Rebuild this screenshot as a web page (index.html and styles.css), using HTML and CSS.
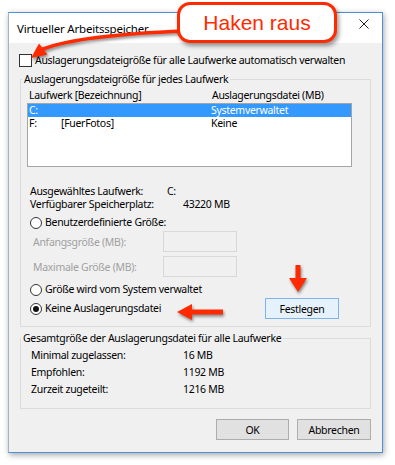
FILE: index.html
```html
<!DOCTYPE html>
<html lang="de">
<head>
<meta charset="utf-8">
<title>Virtueller Arbeitsspeicher</title>
<link rel="stylesheet" href="styles.css">
</head>
<body>
<div class="page">
  <div class="window">
    <div class="titlebar">
      <span class="title">Virtueller Arbeitsspeicher</span>
      <svg class="close" width="10" height="10" viewBox="0 0 10 10"><path d="M0.5 0.5 L9.5 9.5 M9.5 0.5 L0.5 9.5" stroke="#222" stroke-width="1" fill="none"/></svg>
    </div>
    <div class="content">
      <div class="auto-row">
        <span class="checkbox"></span>
        <span>Auslagerungsdateigröße für alle Laufwerke automatisch verwalten</span>
      </div>

      <fieldset class="group group-drives">
        <legend>Auslagerungsdateigröße für jedes Laufwerk</legend>
        <div class="group-body drives-body">
          <div class="list-head">
            <span class="col-drive">Laufwerk [Bezeichnung]</span>
            <span class="col-size">Auslagerungsdatei (MB)</span>
          </div>
          <div class="listbox">
            <div class="list-row selected">
              <span class="col-drive"><span class="letter">C:</span><span></span></span>
              <span class="col-size">Systemverwaltet</span>
            </div>
            <div class="list-row">
              <span class="col-drive"><span class="letter">F:</span><span>[FuerFotos]</span></span>
              <span class="col-size">Keine</span>
            </div>
          </div>

          <div class="info-row first"><span class="info-label w1">Ausgewähltes Laufwerk:</span><span>C:</span></div>
          <div class="info-row"><span class="info-label w2">Verfügbarer Speicherplatz:</span><span>43220 MB</span></div>

          <div class="radio-row r1"><span class="radio"></span><span>Benutzerdefinierte Größe:</span></div>
          <div class="size-row s1"><span class="disabled">Anfangsgröße (MB):</span><span class="textbox"></span></div>
          <div class="size-row s2"><span class="disabled">Maximale Größe (MB):</span><span class="textbox"></span></div>
          <div class="radio-row r2"><span class="radio"></span><span>Größe wird vom System verwaltet</span></div>
          <div class="radio-row r3"><span class="radio checked"></span><span>Keine Auslagerungsdatei</span><button class="btn btn-set">Festlegen</button></div>
        </div>
      </fieldset>

      <fieldset class="group group-total">
        <legend>Gesamtgröße der Auslagerungsdatei für alle Laufwerke</legend>
        <div class="group-body total-body">
          <div class="total-row"><span class="total-label">Minimal zugelassen:</span><span>16 MB</span></div>
          <div class="total-row"><span class="total-label">Empfohlen:</span><span>1192 MB</span></div>
          <div class="total-row"><span class="total-label">Zurzeit zugeteilt:</span><span>1216 MB</span></div>
        </div>
      </fieldset>

      <div class="buttons">
        <button class="btn">OK</button>
        <button class="btn">Abbrechen</button>
      </div>
    </div>
  </div>

  <svg class="curve-arrow" width="200" height="70" viewBox="0 0 200 70">
    <path d="M185 31 Q 80 35 43 49" stroke="#ff2a00" stroke-width="3.5" fill="none" stroke-linecap="round"/>
    <polygon points="31,58 39,43.5 47.5,54.5" fill="#ff2a00"/>
  </svg>
  <div class="callout">Haken raus</div>

  <svg class="arrow-left" width="47" height="17" viewBox="0 0 47 17">
    <polygon points="0,8 15,0 15,5.5 46,5.5 46,10.5 15,10.5 15,16" fill="#ff2a00"/>
  </svg>
  <svg class="arrow-down" width="18" height="28" viewBox="0 0 18 28">
    <polygon points="6.5,0 11.5,0 11.5,13 18,13 9,27 0,13 6.5,13" fill="#ff2a00"/>
  </svg>
</div>
</body>
</html>
```

FILE: styles.css
```css
html, body {
  margin: 0;
  padding: 0;
  background: #ffffff;
}

.page {
  position: relative;
  width: 395px;
  height: 465px;
  padding: 12px 0 0 8px;
  box-sizing: border-box;
  font-family: "Noto Sans", "Open Sans", sans-serif;
  font-size: 10.5px;
  letter-spacing: -0.3px;
  color: #000;
  white-space: nowrap;
}

.window {
  width: 375px;
  height: 441px;
  box-sizing: border-box;
  border: 1px solid #4f8fd3;
  border-left-color: #9fb4cc;
  background: #f0f0f0;
  box-shadow: 1px 2px 6px rgba(0, 0, 0, 0.35);
  display: flex;
  flex-direction: column;
}

.titlebar {
  height: 30px;
  background: #ffffff;
  display: flex;
  align-items: flex-start;
  padding: 5px 12px 0 8px;
  box-sizing: border-box;
}

.title {
  font-size: 11.5px;
  letter-spacing: -0.2px;
  line-height: 16px;
  margin-top: 3px;
  flex: 1;
}

.close {
  margin-top: 1px;
  margin-right: 1px;
}

.content {
  padding: 11px 11px 0 11px;
  display: flex;
  flex-direction: column;
}

.auto-row {
  height: 13px;
  line-height: 13px;
  display: flex;
  align-items: center;
  gap: 3px;
  margin-left: -1px;
}

.checkbox {
  width: 13px;
  height: 13px;
  box-sizing: border-box;
  border: 1px solid #333;
  background: #fff;
  flex: none;
}

.group {
  margin: 0;
  padding: 0;
  border: 1px solid #dcdcdc;
  min-width: 0;
}

.group legend {
  padding: 0 2px;
  line-height: 14px;
  height: 14px;
}

.group-drives {
  margin-top: 5px;
  height: 255px;
  box-sizing: border-box;
}

.group-drives legend {
  margin-left: 1px;
}

.drives-body {
  padding: 0 0 6px 6px;
}

.list-head {
  display: flex;
  line-height: 14px;
  margin-top: 2px;
  padding-left: 2px;
}

.list-head .col-drive {
  width: 183px;
}

.listbox {
  width: 325px;
  height: 64px;
  box-sizing: border-box;
  border: 1px solid #a5a5a5;
  background: #fff;
  margin-top: 1px;
}

.list-row {
  display: flex;
  height: 13px;
  line-height: 13px;
  padding-left: 1px;
}

.list-row.selected {
  background: #3399ff;
  color: #fff;
  height: 12px;
  line-height: 12px;
  padding-bottom: 1px;
}

.list-row .col-drive {
  width: 182px;
  display: flex;
}

.letter {
  width: 32px;
}

.info-row {
  display: flex;
  line-height: 13px;
  padding-left: 3px;
}

.info-row.first {
  margin-top: 18px;
}

.info-label.w1 { width: 137px; }
.info-label.w2 { width: 153px; }

.radio-row {
  display: flex;
  align-items: center;
  gap: 3px;
  padding-left: 3px;
  line-height: 13px;
}

.radio-row.r1 { margin-top: 5px; height: 13px; }
.radio-row.r2 { margin-top: 6px; height: 13px; }
.radio-row.r3 { margin-top: 2px; height: 21px; }

.radio {
  width: 12px;
  height: 12px;
  box-sizing: border-box;
  border: 1px solid #333;
  border-radius: 50%;
  background: #fff;
  flex: none;
  display: flex;
  align-items: center;
  justify-content: center;
}

.radio.checked::after {
  content: "";
  width: 6px;
  height: 6px;
  border-radius: 50%;
  background: #111;
}

.size-row {
  display: flex;
  align-items: center;
  height: 21px;
  padding-left: 6px;
}

.size-row.s1 { margin-top: 2px; }
.size-row.s2 { margin-top: 4px; }

.disabled {
  color: #a0a0a0;
  width: 130px;
}

.textbox {
  width: 74px;
  height: 21px;
  box-sizing: border-box;
  border: 1px solid #d9d9d9;
  background: #f0f0f0;
}

.btn {
  font-family: inherit;
  font-size: 10.5px;
  letter-spacing: -0.3px;
  color: #000;
  height: 21px;
  width: 73px;
  padding: 0;
  box-sizing: border-box;
  border: 1px solid #adadad;
  background: #e1e1e1;
  line-height: 18px;
}

.btn-set {
  margin-left: auto;
  margin-right: 31px;
  width: 74px;
  border-color: #7eb4ea;
  background: #e5f1fb;
}

.group-total {
  margin-top: 4px;
  height: 78px;
  box-sizing: border-box;
}

.total-body {
  padding: 2px 0 0 10px;
}

.total-row {
  display: flex;
  height: 17px;
  line-height: 17px;
}

.total-label {
  width: 152px;
}

.buttons {
  display: flex;
  justify-content: flex-end;
  gap: 8px;
  margin-top: 10px;
}

.buttons .btn:last-child {
  width: 74px;
}

/* annotation overlays */
.curve-arrow {
  position: absolute;
  left: 0;
  top: 0;
  filter: drop-shadow(1px 2px 1.5px rgba(0, 0, 0, 0.45));
}

.callout {
  position: absolute;
  left: 177px;
  top: 2px;
  width: 160px;
  height: 41px;
  box-sizing: border-box;
  border: 3px solid #ff2a00;
  border-radius: 13px;
  background: #fff;
  box-shadow: 2px 3px 4px rgba(0, 0, 0, 0.4);
  color: #ff2a00;
  font-family: "Liberation Sans", Arial, sans-serif;
  font-size: 21px;
  letter-spacing: 0;
  line-height: 35px;
  text-align: center;
}

.arrow-left {
  position: absolute;
  left: 177px;
  top: 304px;
  filter: drop-shadow(1px 2px 1.5px rgba(0, 0, 0, 0.45));
}

.arrow-down {
  position: absolute;
  left: 289px;
  top: 265px;
  filter: drop-shadow(1px 2px 1.5px rgba(0, 0, 0, 0.45));
}
```
